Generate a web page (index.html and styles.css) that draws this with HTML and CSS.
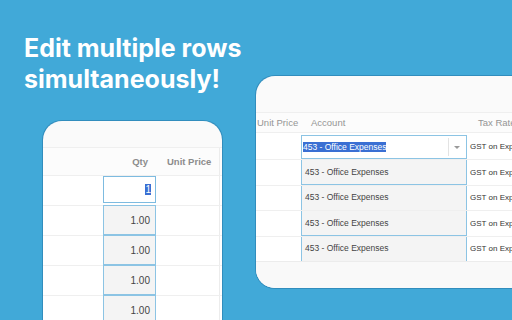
FILE: index.html
```html
<!DOCTYPE html>
<html lang="en">
<head>
    <meta charset="UTF-8">
    <meta name="viewport" content="width=device-width, initial-scale=1.0">
    <title>Edit multiple rows</title>
    <link rel="stylesheet" href="styles.css">
</head>
<body>
    <h1 class="headline">Edit multiple rows<br>simultaneously!</h1>

    <!-- Left screenshot: quantity column -->
    <div class="shot shot-left">
        <div class="shot-top"></div>
        <div class="grid-row head">
            <div class="cell"></div>
            <div class="cell qty">Qty</div>
            <div class="cell price">Unit Price</div>
            <div class="cell edge"></div>
        </div>
        <div class="grid-row">
            <div class="cell"></div>
            <div class="cell qty"><span class="edit-box"><span class="sel">1</span></span></div>
            <div class="cell"></div>
            <div class="cell edge"></div>
        </div>
        <div class="grid-row">
            <div class="cell"></div>
            <div class="cell qty"><span class="multi">1.00</span></div>
            <div class="cell"></div>
            <div class="cell edge"></div>
        </div>
        <div class="grid-row">
            <div class="cell"></div>
            <div class="cell qty"><span class="multi">1.00</span></div>
            <div class="cell"></div>
            <div class="cell edge"></div>
        </div>
        <div class="grid-row">
            <div class="cell"></div>
            <div class="cell qty"><span class="multi">1.00</span></div>
            <div class="cell"></div>
            <div class="cell edge"></div>
        </div>
        <div class="grid-row">
            <div class="cell"></div>
            <div class="cell qty"><span class="multi">1.00</span></div>
            <div class="cell"></div>
            <div class="cell edge"></div>
        </div>
    </div>

    <!-- Right screenshot: account column -->
    <div class="shot shot-right">
        <div class="shot-top"></div>
        <div class="acc-row head">
            <div class="cell first">Unit Price</div>
            <div class="cell account">Account</div>
            <div class="cell tax">Tax Rate</div>
        </div>
        <div class="acc-row first-row">
            <div class="cell"></div>
            <div class="cell account">
                <span class="select-box">
                    <span class="sel">453 - Office Expenses</span>
                    <span class="arrow"></span>
                </span>
            </div>
            <div class="cell tax">GST on Expenses</div>
        </div>
        <div class="acc-row">
            <div class="cell"></div>
            <div class="cell account"><span class="multi">453 - Office Expenses</span></div>
            <div class="cell tax">GST on Expenses</div>
        </div>
        <div class="acc-row">
            <div class="cell"></div>
            <div class="cell account"><span class="multi">453 - Office Expenses</span></div>
            <div class="cell tax">GST on Expenses</div>
        </div>
        <div class="acc-row">
            <div class="cell"></div>
            <div class="cell account"><span class="multi">453 - Office Expenses</span></div>
            <div class="cell tax">GST on Expenses</div>
        </div>
        <div class="acc-row">
            <div class="cell"></div>
            <div class="cell account"><span class="multi">453 - Office Expenses</span></div>
            <div class="cell tax">GST on Expenses</div>
        </div>
        <div class="shot-foot"></div>
    </div>
</body>
</html>
```

FILE: styles.css
```css
body {
    margin: 0;
    width: 512px;
    height: 320px;
    overflow: hidden;
    position: relative;
    background-color: #41a9d8;
    font-family: "Liberation Sans", Arial, sans-serif;
}

.headline {
    margin: 0;
    padding: 33px 0 0 24px;
    font-family: Inter, "Noto Sans", sans-serif;
    font-size: 25px;
    line-height: 31px;
    font-weight: 700;
    color: #fff;
}

.shot {
    position: absolute;
    background-color: #fafafa;
    overflow: hidden;
    box-shadow: 0 0 0 1px rgba(20, 90, 140, 0.35);
}

.shot-left {
    left: 43px;
    top: 121px;
    width: 179px;
    height: 220px;
    border-radius: 19px 19px 0 0;
}

.shot-left .shot-top {
    height: 26px;
}

.grid-row {
    display: grid;
    grid-template-columns: 60px 53px 63px 1fr;
    height: 30px;
    border-top: 1px solid #efefef;
    background-color: #fff;
    box-sizing: border-box;
}

.grid-row.head {
    height: 28px;
    background-color: #fcfcfc;
    font-size: 9.5px;
    font-weight: bold;
    color: #8c8c8c;
}

.grid-row .cell {
    display: flex;
    align-items: center;
}

.grid-row .qty {
    justify-content: flex-end;
}

.grid-row.head .qty {
    padding-right: 8px;
}

.grid-row.head .price {
    padding-left: 11px;
}

.grid-row .edge {
    border-left: 1px solid #ececec;
}

.edit-box {
    display: flex;
    align-items: center;
    justify-content: flex-end;
    box-sizing: border-box;
    width: 53px;
    height: 27px;
    margin-top: -2px;
    padding-right: 4px;
    border: 1px solid #7dbbe0;
    background-color: #fff;
    font-size: 10px;
}

.sel {
    background-color: #3a6fd3;
    color: #fff;
}

.multi {
    display: flex;
    align-items: center;
    justify-content: flex-end;
    box-sizing: border-box;
    width: 53px;
    height: 30px;
    margin-top: -1px;
    padding-right: 5px;
    border: 1px solid #8cc4e4;
    background-color: #f4f4f4;
    font-size: 10px;
    color: #444;
}

.shot-right {
    left: 256px;
    top: 76px;
    width: 280px;
    height: 212px;
    border-radius: 19px 0 0 19px;
    display: flex;
    flex-direction: column;
}

.shot-right .shot-top {
    height: 36px;
    flex: none;
}

.acc-row {
    display: grid;
    grid-template-columns: 45px 166px 1fr;
    height: 25.5px;
    flex: none;
    border-top: 1px solid #efefef;
    background-color: #fff;
    box-sizing: border-box;
    font-size: 8.5px;
    color: #333;
}

.acc-row.head {
    height: 20px;
    background-color: #fcfcfc;
    font-size: 9.5px;
    color: #959595;
}

.acc-row.first-row {
    height: 27px;
}

.acc-row .cell {
    display: flex;
    align-items: center;
    white-space: nowrap;
    overflow: hidden;
}

.acc-row.head .first {
    padding-left: 1px;
}

.acc-row.head .account {
    padding-left: 10px;
}

.acc-row.head .tax {
    padding-left: 11px;
}

.acc-row .tax {
    padding-left: 3px;
    font-size: 8px;
}

.acc-row.head .tax {
    font-size: 9.5px;
}

.select-box {
    display: flex;
    align-items: center;
    position: relative;
    box-sizing: border-box;
    width: 166px;
    height: 24px;
    margin-top: 1px;
    padding-left: 1px;
    border: 1px solid #8cc4e4;
    background-color: #fff;
}

.select-box .arrow {
    position: absolute;
    right: 0;
    top: 2px;
    bottom: 2px;
    width: 17px;
    border-left: 1px solid #e3e3e3;
}

.select-box .arrow::after {
    content: "";
    position: absolute;
    left: 5px;
    top: 8px;
    border-left: 3px solid transparent;
    border-right: 3px solid transparent;
    border-top: 3px solid #9a9a9a;
}

.acc-row .multi {
    justify-content: flex-start;
    width: 166px;
    height: 26.5px;
    padding-left: 3px;
    font-size: 8.5px;
}

.shot-foot {
    flex: 1;
    border-top: 1px solid #ececec;
    background-color: #f9f9f9;
}
```
